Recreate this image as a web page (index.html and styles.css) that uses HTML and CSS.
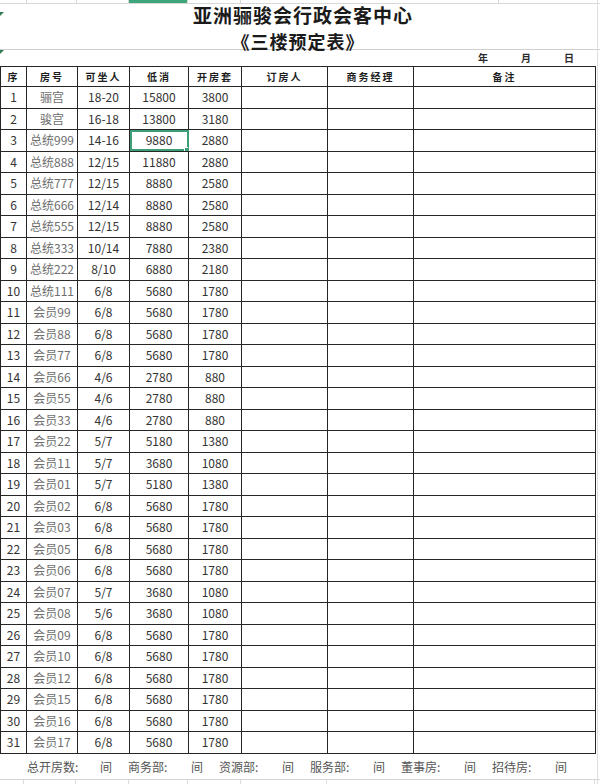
FILE: index.html
```html
<!DOCTYPE html>
<html lang="zh-CN">
<head>
<meta charset="utf-8">
<title>三楼预定表</title>
<link rel="stylesheet" href="styles.css">
</head>
<body>
<div class="page">
  <div class="topstrip">
    <span class="ts c1"></span><span class="ts c2"></span><span class="ts c3"></span><span class="ts sel"></span><span class="ts c5"></span><span class="ts c6"></span><span class="ts c7"></span>
  </div>
  <div class="titlebox">
    <span class="mark mark1"></span>
    <div class="t1">亚洲骊骏会行政会客中心</div>
    <div class="t2">《三楼预定表》</div>
  </div>
  <div class="daterow">
    <span class="mark mark2"></span>
    <span class="d d-y">年</span><span class="d d-m">月</span><span class="d d-d">日</span>
  </div>
  <table class="sheet">
    <colgroup>
      <col class="w1"><col class="w2"><col class="w3"><col class="w4"><col class="w5"><col class="w6"><col class="w7"><col class="w8">
    </colgroup>
    <thead>
      <tr><th>序</th><th>房号</th><th>可坐人</th><th>低消</th><th>开房套</th><th>订房人</th><th>商务经理</th><th>备注</th></tr>
    </thead>
    <tbody id="rows"></tbody>
  </table>
  <div class="footer">
    <span class="fl first">总开房数:</span><span class="fj">间</span>
    <span class="fl">商务部:</span><span class="fj">间</span>
    <span class="fl">资源部:</span><span class="fj">间</span>
    <span class="fl">服务部:</span><span class="fj">间</span>
    <span class="fl">董事房:</span><span class="fj">间</span>
    <span class="fl">招待房:</span><span class="fj">间</span>
  </div>
  <div class="bottomgrid">
    <span class="bg b1"></span><span class="bg b2"></span><span class="bg b3"></span><span class="bg b4"></span><span class="bg b5"></span><span class="bg b6"></span><span class="bg b7"></span>
  </div>
  <span class="edge"></span>
</div>
<script src="app.js"></script>
</body>
</html>
```
FILE: app.js
```js
var data = [
  ["1","骊宫","18-20","15800","3800"],
  ["2","骏宫","16-18","13800","3180"],
  ["3","总统999","14-16","9880","2880"],
  ["4","总统888","12/15","11880","2880"],
  ["5","总统777","12/15","8880","2580"],
  ["6","总统666","12/14","8880","2580"],
  ["7","总统555","12/15","8880","2580"],
  ["8","总统333","10/14","7880","2380"],
  ["9","总统222","8/10","6880","2180"],
  ["10","总统111","6/8","5680","1780"],
  ["11","会员99","6/8","5680","1780"],
  ["12","会员88","6/8","5680","1780"],
  ["13","会员77","6/8","5680","1780"],
  ["14","会员66","4/6","2780","880"],
  ["15","会员55","4/6","2780","880"],
  ["16","会员33","4/6","2780","880"],
  ["17","会员22","5/7","5180","1380"],
  ["18","会员11","5/7","3680","1080"],
  ["19","会员01","5/7","5180","1380"],
  ["20","会员02","6/8","5680","1780"],
  ["21","会员03","6/8","5680","1780"],
  ["22","会员05","6/8","5680","1780"],
  ["23","会员06","6/8","5680","1780"],
  ["24","会员07","5/7","3680","1080"],
  ["25","会员08","5/6","3680","1080"],
  ["26","会员09","6/8","5680","1780"],
  ["27","会员10","6/8","5680","1780"],
  ["28","会员12","6/8","5680","1780"],
  ["29","会员15","6/8","5680","1780"],
  ["30","会员16","6/8","5680","1780"],
  ["31","会员17","6/8","5680","1780"]
];
var tb = document.getElementById("rows");
data.forEach(function (r, i) {
  var tr = document.createElement("tr");
  for (var c = 0; c < 8; c++) {
    var td = document.createElement("td");
    td.textContent = c < 5 ? r[c] : "";
    if (c === 1) td.className = "name";
    if (i === 2 && c === 3) td.className = "selected";
    tr.appendChild(td);
  }
  tb.appendChild(tr);
});
```
FILE: styles.css
```css
html, body {
  margin: 0;
  padding: 0;
  background: #fff;
}
.page {
  width: 600px;
  height: 784px;
  position: relative;
  overflow: hidden;
  font-family: "Noto Sans CJK SC", "Liberation Sans", sans-serif;
  color: #2a2a2a;
}
.topstrip {
  height: 3px;
  display: flex;
  border-bottom: 1px solid #d8d8d8;
}
.ts { height: 3px; border-right: 1px solid #d8d8d8; box-sizing: border-box; }
.c1 { width: 27px; }
.c2 { width: 50px; }
.c3 { width: 52px; }
.sel { width: 59px; background: #3fa57a; }
.c5 { width: 53px; }
.c6 { width: 258px; }
.c7 { flex: 1; border-right: none; }
.titlebox {
  height: 45px;
  border-bottom: 1px solid #cfcfcf;
  text-align: center;
  position: relative;
  padding-left: 6px;
}
.t1 {
  font-size: 19px;
  font-weight: 700;
  letter-spacing: 1px;
  line-height: 21px;
  color: #1a1a1a;
  padding-top: 0;
}
.t2 {
  font-size: 18px;
  font-weight: 700;
  letter-spacing: 1px;
  line-height: 20px;
  color: #1a1a1a;
  margin-top: 6px;
  margin-left: -10px;
}
.mark {
  position: absolute;
  left: 0;
  width: 0;
  height: 0;
  border-top: 4px solid #2f7a52;
  border-right: 4px solid transparent;
}
.mark1 { top: 8px; }
.mark2 { top: 0; }
.daterow {
  height: 16px;
  position: relative;
  font-size: 10px;
  font-weight: 700;
  line-height: 16px;
  display: flex;
  padding-left: 478px;
}
.d { width: 43px; }
.d-d { width: auto; }
.sheet {
  border-collapse: collapse;
  table-layout: fixed;
  width: 595px;
  margin-left: 0;
}
.w1 { width: 26px; }
.w2 { width: 51px; }
.w3 { width: 52px; }
.w4 { width: 59px; }
.w5 { width: 53px; }
.w6 { width: 86px; }
.w7 { width: 86px; }
.w8 { width: 182px; }
.sheet th, .sheet td {
  border: 1px solid #262626;
  padding: 0;
  text-align: center;
  vertical-align: middle;
  overflow: hidden;
  white-space: nowrap;
}
.sheet th {
  height: 19px;
  font-size: 10px;
  font-weight: 700;
  letter-spacing: 2px;
  line-height: 19px;
  color: #1e1e1e;
}
.sheet td {
  height: 20.5px;
  font-size: 12px;
  line-height: 16px;
  color: #333;
}
.sheet td.name {
  color: #6e6e6e;
  font-weight: 400;
}
.sheet td.selected {
  position: relative;
  outline: 2px solid #3d9f76;
  outline-offset: -2px;
}
.sheet td.selected::after {
  content: "";
  position: absolute;
  right: -2px;
  bottom: -2px;
  width: 4px;
  height: 4px;
  background: #3d9f76;
  border: 1px solid #fff;
}
.footer {
  height: 25px;
  display: flex;
  align-items: center;
  padding-left: 27px;
  font-size: 12px;
  color: #555;
  border-bottom: 1px solid #d6d6d6;
}
.fl { width: 63px; }
.fl.first { width: 73px; }
.fj { width: 28px; }
.bottomgrid {
  height: 8px;
  display: flex;
}
.bg { height: 8px; border-right: 1px solid #dcdcdc; box-sizing: border-box; }
.b1 { width: 24px; }
.b2 { width: 52px; }
.b3 { width: 53px; }
.b4 { width: 59px; }
.b5 { width: 53px; }
.b6 { width: 86px; }
.b7 { width: 268px; }
.edge {
  position: absolute;
  top: 0;
  bottom: 0;
  left: 597px;
  width: 1px;
  background: #dedede;
}
```
